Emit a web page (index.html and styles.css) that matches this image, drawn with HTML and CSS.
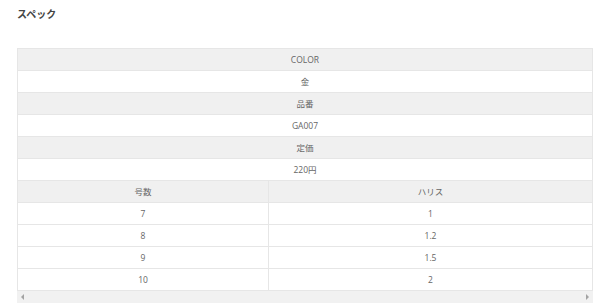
FILE: index.html
```html
<!DOCTYPE html>
<html lang="ja">
<head>
<meta charset="utf-8">
<title>スペック</title>
<link rel="stylesheet" href="styles.css">
</head>
<body>
<div class="page">
  <h2 class="title">スペック</h2>
  <div class="scroller">
    <table class="spec">
      <colgroup><col class="c1"><col class="c2"></colgroup>
      <tr class="head"><td colspan="2">COLOR</td></tr>
      <tr><td colspan="2">金</td></tr>
      <tr class="head"><td colspan="2">品番</td></tr>
      <tr><td colspan="2">GA007</td></tr>
      <tr class="head"><td colspan="2">定価</td></tr>
      <tr><td colspan="2">220円</td></tr>
      <tr class="head"><td>号数</td><td>ハリス</td></tr>
      <tr><td>7</td><td>1</td></tr>
      <tr><td>8</td><td>1.2</td></tr>
      <tr><td>9</td><td>1.5</td></tr>
      <tr><td>10</td><td>2</td></tr>
    </table>
    <div class="scrollbar">
      <span class="arrow left"></span>
      <span class="arrow right"></span>
    </div>
  </div>
</div>
</body>
</html>
```

FILE: styles.css
```css
html, body {
  margin: 0;
  padding: 0;
  background: #fff;
}
body {
  font-family: "Open Sans", "Noto Sans CJK JP", sans-serif;
  color: #666;
}
.page {
  padding: 6px 7px 0 17px;
}
.title {
  margin: 0;
  font-size: 10px;
  font-weight: bold;
  color: #444;
  line-height: 16px;
  font-family: "Noto Sans CJK JP", sans-serif;
}
.scroller {
  margin-top: 26px;
  width: 576px;
}
.spec {
  width: 100%;
  border-collapse: collapse;
  table-layout: fixed;
  font-size: 8.5px;
}
.c1 { width: 251px; }
.spec td {
  border: 1px solid #e6e6e6;
  height: 21px;
  padding: 0;
  text-align: center;
  vertical-align: middle;
  line-height: 12px;
}
.spec tr.head td {
  background: #f0f0f0;
}
.scrollbar {
  height: 12px;
  background: #f1f1f1;
  display: flex;
  justify-content: space-between;
  align-items: center;
  padding: 0 4px;
}
.arrow {
  width: 0;
  height: 0;
  border-top: 3px solid transparent;
  border-bottom: 3px solid transparent;
}
.arrow.left { border-right: 3px solid #a3a3a3; }
.arrow.right { border-left: 3px solid #a3a3a3; }
```
